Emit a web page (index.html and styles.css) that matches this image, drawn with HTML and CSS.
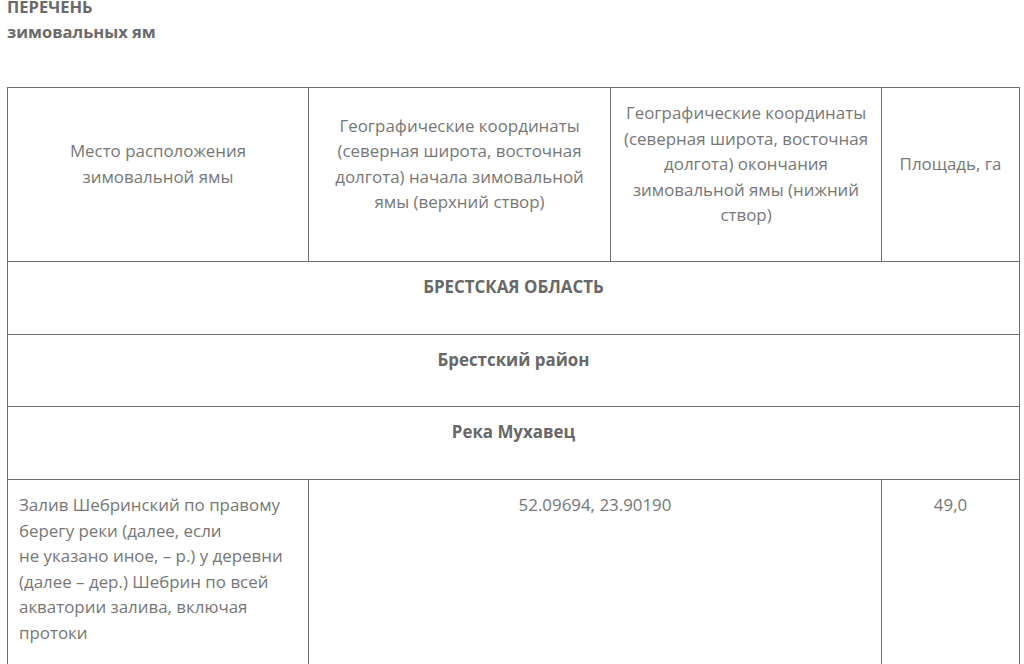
FILE: index.html
```html
<!DOCTYPE html>
<html lang="ru">
<head>
<meta charset="utf-8">
<title>Перечень зимовальных ям</title>
<link rel="stylesheet" href="styles.css">
</head>
<body>
<div class="page">
  <h2 class="title">ПЕРЕЧЕНЬ<br>зимовальных ям</h2>
  <table class="list">
    <colgroup>
      <col class="c1"><col class="c2"><col class="c3"><col class="c4">
    </colgroup>
    <tr class="head">
      <td><p>Место расположения зимовальной ямы</p></td>
      <td><p>Географические координаты (северная широта, восточная долгота) начала зимовальной ямы (верхний створ)</p></td>
      <td><p>Географические координаты (северная широта, восточная долгота) окончания зимовальной ямы (нижний створ)</p></td>
      <td><p>Площадь, га</p></td>
    </tr>
    <tr class="group">
      <td colspan="4"><p>БРЕСТСКАЯ ОБЛАСТЬ</p></td>
    </tr>
    <tr class="group">
      <td colspan="4"><p>Брестский район</p></td>
    </tr>
    <tr class="group">
      <td colspan="4"><p>Река Мухавец</p></td>
    </tr>
    <tr class="row">
      <td class="place"><p>Залив Шебринский по правому берегу реки (далее, если<br>не указано иное, – р.) у деревни (далее – дер.) Шебрин по всей акватории залива, включая протоки</p></td>
      <td colspan="2" class="center"><p>52.09694, 23.90190</p></td>
      <td class="center"><p>49,0</p></td>
    </tr>
  </table>
</div>
</body>
</html>
```

FILE: styles.css
```css
html, body {
  margin: 0;
  padding: 0;
  background: #ffffff;
}

.page {
  padding: 0 6px 0 7px;
  font-family: "Open Sans", "Noto Sans", sans-serif;
  color: #777777;
  font-size: 16.9px;
  line-height: 25.5px;
}

.title {
  margin: -5px 0 43px 0;
  font-size: 16.5px;
  line-height: 24.5px;
  font-weight: 700;
  color: #6a6a6a;
}

.list {
  width: 1012px;
  border-collapse: collapse;
  table-layout: fixed;
}

.c1 { width: 301px; }
.c2 { width: 302px; }
.c3 { width: 271px; }
.c4 { width: 138px; }

.list td {
  border: 1px solid #707070;
  padding: 12px 11px;
  vertical-align: middle;
}

.list td p {
  margin: 0 0 21.5px 0;
}

.head td {
  text-align: center;
}

.group td {
  text-align: center;
  font-weight: 700;
  color: #686868;
}

.list .group td p {
  margin-bottom: 22.2px;
}

.row td {
  vertical-align: top;
}

.row .place {
  text-align: left;
}

.row .center {
  text-align: center;
}
```
